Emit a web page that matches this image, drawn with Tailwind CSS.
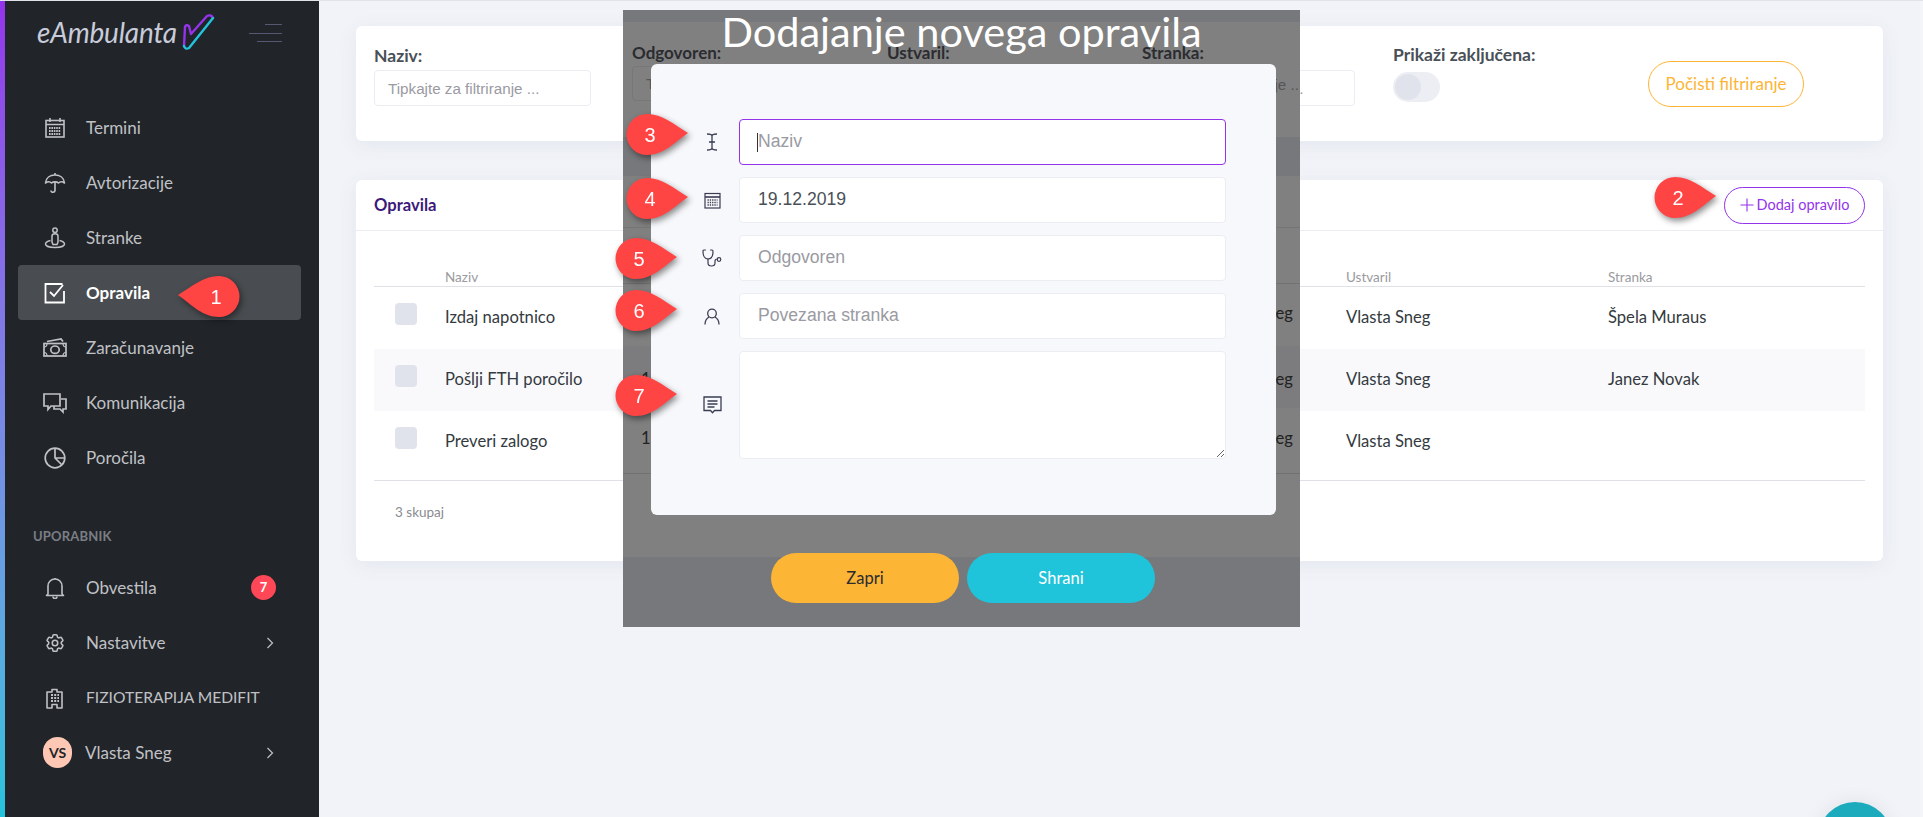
<!DOCTYPE html>
<html lang="sl">
<head>
<meta charset="UTF-8">
<meta name="viewport" content="width=device-width, initial-scale=1.0">
<title>Opravila - eAmbulanta</title>
<script src="https://cdn.jsdelivr.net/npm/@tailwindcss/browser@4"></script>
</head>
<body class="relative h-[817px] w-full overflow-hidden bg-[#f1f3f8] font-['Lato',sans-serif] text-[#343a40]">

<div class="flex h-full flex-col">
  <div class="h-px shrink-0 bg-[#e1e3ea]"></div>
  <div class="flex min-h-0 flex-1">

    <!-- Sidebar -->
    <aside class="flex w-[319px] shrink-0 bg-[#212529]">
      <div class="w-[5px] shrink-0 bg-gradient-to-b from-[#9333ea] to-[#22c3dc]"></div>
      <div class="flex-1">
        <!-- Logo -->
        <div class="flex h-[60px] items-start pl-[32px]">
          <span class="mt-[14px] text-[28px] leading-[34px] tracking-[-0.2px] text-[#c8cbd9] italic">eAmbulanta</span>
          <svg class="mt-[4px] ml-[-7px] shrink-0" width="60" height="55" viewBox="0 0 60 55" fill="none" stroke-width="2.4" stroke-linecap="round" stroke-linejoin="round">
            <path d="M14 41 L15 22 Q16 19 19 21 L21 29 L37 11 Q41 9 43 13" stroke="#9333ea"/>
            <path d="M43 13 L19 43 Q15 45 14 41" stroke="#22c3dc"/>
          </svg>
          <div class="mt-[23px] ml-[19px] flex w-[33px] flex-col items-end gap-[7.5px]">
            <div class="h-px w-[17px] bg-[#565871]"></div>
            <div class="h-px w-[33px] bg-[#565871]"></div>
            <div class="h-px w-[25px] bg-[#565871]"></div>
          </div>
        </div>

        <!-- Main nav -->
        <nav class="mt-[39px] pr-[18px] pl-[13px] text-[17px] text-[#c0c1c6]">
          <a class="flex h-[55px] items-center pl-[26px]">
            <svg class="mr-[20px] shrink-0" width="22" height="22" viewBox="0 0 22 22" fill="none" stroke="currentColor" stroke-width="1.6"><rect x="2" y="3.5" width="18" height="16.5"/><path d="M6 1v4M16 1v4M2 7.5h18"/><path d="M5 11h12M5 14h12M5 17h12" stroke-width="2" stroke-dasharray="1.6 .8"/></svg>
            <span>Termini</span>
          </a>
          <a class="flex h-[55px] items-center pl-[26px]">
            <svg class="mr-[20px] shrink-0" width="22" height="22" viewBox="0 0 22 22" fill="none" stroke="currentColor" stroke-width="1.6"><path d="M1.5 11C2 6 6 3 11 3s9 3 9.500 8c-2-1.500-4.500-1.500-6 0-1.500-1.500-5.500-1.500-7 0-1.500-1.500-4-1.500-6 0z" stroke-linejoin="round"/><path d="M11 1v2M11 10v8c0 3-4 3-4 .5"/></svg>
            <span>Avtorizacije</span>
          </a>
          <a class="flex h-[55px] items-center pl-[26px]">
            <svg class="mr-[20px] shrink-0" width="22" height="22" viewBox="0 0 22 22" fill="none" stroke="currentColor" stroke-width="1.5"><circle cx="11" cy="3.200" r="2.200"/><path d="M8 15V9c0-3 6-3 6 0v6l-1 2.500H9z"/><path d="M6.500 13.500C3.500 14.300 1.500 15.500 1.500 17c0 2 4 3.500 9.500 3.500s9.500-1.500 9.500-3.500c0-1.500-2-2.700-5-3.500"/></svg>
            <span>Stranke</span>
          </a>
          <a class="flex h-[55px] items-center rounded bg-[#494c50] pl-[26px] font-bold text-white">
            <svg class="mr-[20px] shrink-0" width="22" height="22" viewBox="0 0 22 22" fill="none" stroke="currentColor" stroke-width="1.8"><path d="M20 9v11.500H1.500V2h17"/><path d="M6 10l4 4 9-11"/></svg>
            <span>Opravila</span>
          </a>
          <a class="flex h-[55px] items-center pl-[26px]">
            <svg class="mr-[19px] ml-[-1px] shrink-0" width="24" height="22" viewBox="0 0 24 22" fill="none" stroke="currentColor" stroke-width="1.7"><rect x="1" y="6.500" width="22" height="12.500"/><ellipse cx="12" cy="12.700" rx="4.200" ry="3.700"/><path d="M4 4.500l14-2.500 2 2.500" /><path d="M1 10c2 0 3-1 3-3.500M23 10c-2 0-3-1-3-3.500M1 15.500c2 0 3 1 3 3.500M23 15.500c-2 0-3 1-3 3.500" stroke-width="1.200"/></svg>
            <span>Zaračunavanje</span>
          </a>
          <a class="flex h-[55px] items-center pl-[26px]">
            <svg class="mr-[19px] ml-[-1px] shrink-0" width="24" height="22" viewBox="0 0 24 22" fill="none" stroke="currentColor" stroke-width="1.7"><path d="M1 2h16v12H8l-3 3.500V14H1z"/><path d="M18 7h5v10h-3v3l-3-3h-6v-3"/></svg>
            <span>Komunikacija</span>
          </a>
          <a class="flex h-[55px] items-center pl-[26px]">
            <svg class="mr-[20px] shrink-0" width="22" height="22" viewBox="0 0 22 22" fill="none" stroke="currentColor" stroke-width="1.7"><circle cx="11" cy="11" r="9.800"/><path d="M11 1.200V11l7 7M11 11h9.800"/></svg>
            <span>Poročila</span>
          </a>
        </nav>

        <div class="mt-[35px] h-[32px] pl-[28px] text-[13px] leading-[32px] font-bold tracking-[0.2px] text-[#7b7e85]">UPORABNIK</div>

        <!-- User nav -->
        <nav class="mt-[8px] pr-[18px] pl-[13px] text-[17px] text-[#c0c1c6]">
          <a class="flex h-[55px] items-center pl-[26px]">
            <svg class="mr-[20px] shrink-0" width="22" height="22" viewBox="0 0 22 22" fill="none" stroke="currentColor" stroke-width="1.600"><path d="M4 17V9a7 7 0 0 1 14 0v8l1.500 1.500h-17z" stroke-linejoin="round"/><path d="M9 19.500a2 2 0 0 0 4 0M11 1v1"/></svg>
            <span class="flex-1">Obvestila</span>
            <span class="mr-[25px] flex h-[25px] w-[25px] items-center justify-center rounded-full bg-[#ff4757] text-[13px] font-bold text-white">7</span>
          </a>
          <a class="flex h-[55px] items-center pl-[26px]">
            <svg class="mr-[20px] shrink-0" width="22" height="22" viewBox="0 0 24 24" fill="none" stroke="currentColor" stroke-width="1.700" stroke-linejoin="round"><path d="M9.594 3.940c.09-.542.560-.940 1.110-.940h2.593c.550 0 1.020.398 1.110.940l.213 1.281c.063.374.313.686.645.870.074.040.147.083.220.127.325.196.720.257 1.075.124l1.217-.456a1.125 1.125 0 0 1 1.370.490l1.296 2.247a1.125 1.125 0 0 1-.260 1.431l-1.003.827c-.293.241-.438.613-.430.992a7.723 7.723 0 0 1 0 .255c-.008.378.137.750.430.991l1.004.827c.424.350.534.955.260 1.430l-1.298 2.247a1.125 1.125 0 0 1-1.369.491l-1.217-.456c-.355-.133-.750-.072-1.076.124a6.470 6.470 0 0 1-.220.128c-.331.183-.581.495-.644.869l-.213 1.281c-.090.543-.560.940-1.110.940h-2.594c-.550 0-1.019-.398-1.110-.940l-.213-1.281c-.062-.374-.312-.686-.644-.870a6.520 6.520 0 0 1-.220-.127c-.325-.196-.720-.257-1.076-.124l-1.217.456a1.125 1.125 0 0 1-1.369-.490l-1.297-2.247a1.125 1.125 0 0 1 .260-1.431l1.004-.827c.292-.240.437-.613.430-.991a6.932 6.932 0 0 1 0-.255c.007-.380-.138-.751-.430-.992l-1.004-.827a1.125 1.125 0 0 1-.260-1.430l1.297-2.247a1.125 1.125 0 0 1 1.370-.491l1.216.456c.356.133.751.072 1.076-.124.072-.044.146-.086.220-.128.332-.183.582-.495.644-.869l.214-1.280z"/><circle cx="12" cy="12" r="3"/></svg>
            <span class="flex-1">Nastavitve</span>
            <svg class="mr-[27px]" width="8" height="12" viewBox="0 0 8 12" fill="none" stroke="currentColor" stroke-width="1.200"><path d="M1.500 1l5 5-5 5"/></svg>
          </a>
          <a class="flex h-[55px] items-center pl-[26px]">
            <svg class="mr-[20px] shrink-0" width="22" height="22" viewBox="0 0 22 22" fill="none" stroke="currentColor" stroke-width="1.600"><path d="M3 5h5V2.500h5V5h5v16h-5v-3.500H8V21H3z" stroke-linejoin="round"/><path d="M7 8h8M7 11h8M7 14h8" stroke-width="2" stroke-dasharray="2 1.200"/></svg>
            <span class="text-[15.600px] whitespace-nowrap">FIZIOTERAPIJA MEDIFIT</span>
          </a>
          <a class="flex h-[55px] items-center pl-[25px]">
            <span class="mr-[13px] flex h-[31px] w-[29px] shrink-0 items-center justify-center rounded-full bg-[#ffc8b4] text-[14px] font-bold text-[#212529]">VS</span>
            <span class="flex-1">Vlasta Sneg</span>
            <svg class="mr-[27px]" width="8" height="12" viewBox="0 0 8 12" fill="none" stroke="currentColor" stroke-width="1.200"><path d="M1.500 1l5 5-5 5"/></svg>
          </a>
        </nav>
      </div>
    </aside>

    <!-- Main -->
    <main class="min-w-0 flex-1 pt-[25px] pr-[37px] pl-[37px]">
      <!-- Filters -->
      <section class="flex h-[115px] rounded-md bg-white px-[18px] shadow-[0_4px_20px_rgba(80,90,130,0.08)]">
        <div class="mt-[19px] w-[217px]">
          <label class="block text-[17.500px] leading-[22px] font-bold text-[#495057]">Naziv:</label>
          <input class="mt-[3px] h-[36px] w-full rounded border border-[#ebedf2] px-[13px] font-['Liberation_Sans',sans-serif] text-[15.200px] placeholder:text-[#9a9aa2]" placeholder="Tipkajte za filtriranje ...">
        </div>
        <div class="mt-[44px] ml-[547px] w-[217px]">
          <input class="h-[36px] w-full rounded border border-[#ebedf2] px-[13px] font-['Liberation_Sans',sans-serif] text-[15.200px] placeholder:text-[#9a9aa2]" placeholder="Tipkajte za filtriranje ...">
        </div>
        <div class="mt-[18px] ml-[38px] w-[255px]">
          <label class="block text-[17.500px] leading-[22px] font-bold whitespace-nowrap text-[#495057]">Prikaži zaključena:</label>
          <div class="mt-[6px] h-[30px] w-[47px] rounded-full bg-[#eceef3] p-[2px]">
            <div class="h-[26px] w-[26px] rounded-full bg-[#e0e3ec]"></div>
          </div>
        </div>
        <button class="mt-[35px] h-[46px] w-[156px] rounded-full border border-[#fdb536] text-[17px] text-[#fdb536]">Počisti filtriranje</button>
      </section>

      <!-- Tasks -->
      <section class="mt-[39px] h-[381px] rounded-md bg-white shadow-[0_4px_20px_rgba(80,90,130,0.08)]">
        <header class="flex h-[51px] items-center justify-between border-b border-[#ebedf2] pr-[18px] pl-[18px]">
          <h2 class="text-[16.600px] font-bold text-[#3b1a7a]">Opravila</h2>
          <button class="flex h-[37px] w-[141px] items-center justify-center gap-[3px] rounded-full border border-[#9333ea] text-[14.500px] text-[#9333ea]">
            <svg width="14" height="14" viewBox="0 0 14 14" fill="none" stroke="currentColor" stroke-width="1.100"><path d="M7 .5v13M.5 7h13"/></svg>
            <span>Dodaj opravilo</span>
          </button>
        </header>
        <div class="mx-[18px]">
          <div class="grid h-[56px] grid-cols-[71px_901px_262px_1fr] items-end border-b border-[#dfe1e6] text-[13.500px] leading-[18px] text-[#9a9ba0]">
            <span></span><span>Naziv</span><span>Ustvaril</span><span>Stranka</span>
          </div>
          <div class="grid h-[62px] grid-cols-[71px_901px_262px_1fr] items-center pb-[2px] text-[16.600px]">
            <span class="mb-[6px] ml-[21px] h-[22px] w-[22px] rounded bg-[#e0e3ec]"></span><span>Izdaj napotnico</span><span>Vlasta Sneg</span><span>Špela Muraus</span>
          </div>
          <div class="grid h-[62px] grid-cols-[71px_901px_262px_1fr] items-center bg-[#f9f9fc] pb-[2px] text-[16.600px]">
            <span class="mb-[6px] ml-[21px] h-[22px] w-[22px] rounded bg-[#e0e3ec]"></span><span>Pošlji FTH poročilo</span><span>Vlasta Sneg</span><span>Janez Novak</span>
          </div>
          <div class="grid h-[70px] grid-cols-[71px_901px_262px_1fr] items-center border-b border-[#dfe1e6] pb-[8px] text-[16.600px]">
            <span class="mb-[8px] ml-[21px] h-[22px] w-[22px] rounded bg-[#e0e3ec]"></span><span>Preveri zalogo</span><span>Vlasta Sneg</span><span></span>
          </div>
          <p class="mt-[21px] pl-[21px] text-[13.500px] text-[#8a8b90]">3 skupaj</p>
        </div>
      </section>
    </main>
    <div class="w-[3px] shrink-0 bg-[#f4f5f8]"></div>
  </div>
</div>

<!-- Chat button, cut off by the window -->
<div class="absolute top-[802px] left-[1818px] h-[74px] w-[74px] rounded-full bg-[#1cabbd] shadow-[0_0_20px_rgba(0,0,0,0.08)]"></div>

<!-- Dimmed dialog layer -->
<div class="absolute top-[10px] left-[623px] h-[617px] w-[677px] overflow-hidden bg-[#77787b]">
  <div class="absolute top-[12px] left-0 h-[115px] w-full bg-[#808080]">
    <div class="flex pt-[20px] pl-[9px] text-[17px] leading-[22px] font-bold text-[#2b2c30]">
      <span class="w-[255px]">Odgovoren:</span><span class="w-[255px]">Ustvaril:</span><span>Stranka:</span>
    </div>
    <div class="mt-[2px] ml-[9px] h-[35px] w-[100px] rounded border border-[#777] pl-[13px] font-['Liberation_Sans',sans-serif] text-[15.200px] leading-[33px] text-[#555]">Tipkajte</div>
    <span class="absolute top-[46px] left-[643px] font-['Liberation_Sans',sans-serif] text-[15.200px] leading-[33px] whitespace-nowrap text-[#555]">nje ...</span>
  </div>
  <div class="absolute top-[166px] left-0 h-[381px] w-full bg-[#808080]">
    <div class="mt-[51px] border-t border-[#757575]"></div>
    <div class="mt-[55px] border-t border-[#727272]"></div>
    <div class="h-[62px] pt-[18px] text-[16.600px] leading-[22px] text-[#222]"><span class="float-right pr-[7px]">Vlasta Sneg</span></div>
    <div class="h-[62px] bg-[#7c7c7e] pt-[22px] text-[16.600px] leading-[22px] text-[#222]"><span class="pl-[18px]">19.12.2019</span><span class="float-right pr-[7px]">Vlasta Sneg</span></div>
    <div class="h-[66px] border-b border-[#727272] pt-[19px] text-[16.600px] leading-[22px] text-[#222]"><span class="pl-[18px]">19.12.2019</span><span class="float-right pr-[7px]">Vlasta Sneg</span></div>
  </div>

  <h1 class="absolute top-[-6px] left-0 w-full text-center text-[41.500px] leading-[54px] text-white">Dodajanje novega opravila</h1>

  <!-- Dialog body -->
  <div class="absolute top-[54px] left-[28px] flex h-[451px] w-[625px] flex-col gap-[12px] rounded-md bg-[#f7f8fb] pt-[55px] pr-[50px] pl-[41px] font-['Liberation_Sans',sans-serif] text-[17.600px]">
    <div class="flex items-center gap-[7px]">
      <div class="flex w-[40px] justify-center text-[#3a3d52]">
        <svg width="14" height="18" viewBox="0 0 14 18" fill="none" stroke="currentColor" stroke-width="1.300"><path d="M2 1c3 0 5 .5 5 2v12c0 1.500-2 2-5 2M12 1c-3 0-5 .5-5 2v12c0 1.500 2 2 5 2M4 9h6"/></svg>
      </div>
      <div class="relative flex-1">
        <input class="h-[46px] w-full rounded border border-[#9333ea] bg-white px-[18px] pb-[2px] placeholder:text-[#9a9aa2]" placeholder="Naziv">
        <span class="absolute top-[14px] left-[18px] h-[19px] w-px bg-[#333]"></span>
      </div>
    </div>
    <div class="flex items-center gap-[7px]">
      <div class="flex w-[40px] justify-center text-[#3a3d52]">
        <svg width="17" height="17" viewBox="0 0 17 17" fill="none" stroke="currentColor" stroke-width="1.200"><rect x="1" y="1.500" width="15" height="14.500"/><path d="M1 5h15" stroke-width="1.600"/><path d="M3.500 8h10M3.500 10.500h10M3.500 13h10" stroke-dasharray="1.300 1" stroke-width="1.300"/></svg>
      </div>
      <input class="h-[46px] flex-1 rounded border border-[#ebedf2] bg-white px-[18px] pb-[2px] text-[#495057]" value="19.12.2019">
    </div>
    <div class="flex items-center gap-[7px]">
      <div class="flex w-[40px] justify-center text-[#3a3d52]">
        <svg width="20" height="19" viewBox="0 0 20 19" fill="none" stroke="currentColor" stroke-width="1.200" stroke-linecap="round"><path d="M3.500 1H2C1.200 1 1 1.500 1 2.500 1 7 3 10 6 10s5-3 5-7.500C11 1.500 10.800 1 10 1H8.500"/><path d="M6 10v4c0 4 7 4 7 0v-2c0-1 1-2 2.500-2"/><circle cx="17" cy="10.500" r="1.800"/></svg>
      </div>
      <input class="h-[46px] flex-1 rounded border border-[#ebedf2] bg-white px-[18px] pb-[2px] placeholder:text-[#9a9aa2]" placeholder="Odgovoren">
    </div>
    <div class="flex items-center gap-[7px]">
      <div class="flex w-[40px] justify-center text-[#3a3d52]">
        <svg width="16" height="17" viewBox="0 0 16 17" fill="none" stroke="currentColor" stroke-width="1.300"><circle cx="8" cy="5.500" r="4.300"/><path d="M5 9C2.500 10.500 1 13 1 16.500M11 9c2.500 1.500 4 4 4 7.500"/></svg>
      </div>
      <input class="h-[46px] flex-1 rounded border border-[#ebedf2] bg-white px-[18px] pb-[2px] placeholder:text-[#9a9aa2]" placeholder="Povezana stranka">
    </div>
    <div class="flex items-center gap-[7px]">
      <div class="flex w-[40px] justify-center text-[#3a3d52]">
        <svg width="19" height="18" viewBox="0 0 19 18" fill="none" stroke="currentColor" stroke-width="1.300"><path d="M1 1h17v13.500h-6.500l-2 2.200-2-2.200H1z"/><path d="M4.500 5h10M4.500 8h10M4.500 11h7"/></svg>
      </div>
      <textarea class="h-[108px] flex-1 rounded border border-[#ebedf2] bg-white"></textarea>
    </div>
  </div>

  <!-- Dialog actions -->
  <div class="absolute top-[543px] left-[148px] flex gap-[8px] text-[16.500px]">
    <button class="h-[50px] w-[188px] rounded-full bg-[#fdb536] text-[#2b2c30]">Zapri</button>
    <button class="h-[50px] w-[188px] rounded-full bg-[#1fc4db] text-white">Shrani</button>
  </div>
</div>

<!-- Numbered callouts -->
<div class="absolute top-[276px] left-[178px] h-[41px] w-[63px] drop-shadow-[2px_3px_3px_rgba(0,0,0,0.45)]">
  <svg class="absolute inset-0 -scale-x-100" width="63" height="41" viewBox="0 0 63 41"><path d="M63 19C48 10 38 0 22 0a20.500 20.500 0 0 0 0 41c16 0 26-11 41-22z" fill="#ff4444"/></svg>
  <span class="absolute right-[15px] w-[20px] text-center font-['Liberation_Sans',sans-serif] text-[20px] leading-[43px] text-white">1</span>
</div>
<div class="absolute top-[177px] left-[1653px] h-[41px] w-[63px] drop-shadow-[2px_3px_3px_rgba(0,0,0,0.45)]">
  <svg class="absolute inset-0" width="63" height="41" viewBox="0 0 63 41"><path d="M63 19C48 10 38 0 22 0a20.500 20.500 0 0 0 0 41c16 0 26-11 41-22z" fill="#ff4444"/></svg>
  <span class="absolute left-[15px] w-[20px] text-center font-['Liberation_Sans',sans-serif] text-[20px] leading-[43px] text-white">2</span>
</div>
<div class="absolute top-[114px] left-[625px] h-[41px] w-[63px] drop-shadow-[2px_3px_3px_rgba(0,0,0,0.45)]">
  <svg class="absolute inset-0" width="63" height="41" viewBox="0 0 63 41"><path d="M63 19C48 10 38 0 22 0a20.500 20.500 0 0 0 0 41c16 0 26-11 41-22z" fill="#ff4444"/></svg>
  <span class="absolute left-[15px] w-[20px] text-center font-['Liberation_Sans',sans-serif] text-[20px] leading-[43px] text-white">3</span>
</div>
<div class="absolute top-[178px] left-[625px] h-[41px] w-[63px] drop-shadow-[2px_3px_3px_rgba(0,0,0,0.45)]">
  <svg class="absolute inset-0" width="63" height="41" viewBox="0 0 63 41"><path d="M63 19C48 10 38 0 22 0a20.500 20.500 0 0 0 0 41c16 0 26-11 41-22z" fill="#ff4444"/></svg>
  <span class="absolute left-[15px] w-[20px] text-center font-['Liberation_Sans',sans-serif] text-[20px] leading-[43px] text-white">4</span>
</div>
<div class="absolute top-[238px] left-[614px] h-[41px] w-[63px] drop-shadow-[2px_3px_3px_rgba(0,0,0,0.45)]">
  <svg class="absolute inset-0" width="63" height="41" viewBox="0 0 63 41"><path d="M63 19C48 10 38 0 22 0a20.500 20.500 0 0 0 0 41c16 0 26-11 41-22z" fill="#ff4444"/></svg>
  <span class="absolute left-[15px] w-[20px] text-center font-['Liberation_Sans',sans-serif] text-[20px] leading-[43px] text-white">5</span>
</div>
<div class="absolute top-[290px] left-[614px] h-[41px] w-[63px] drop-shadow-[2px_3px_3px_rgba(0,0,0,0.45)]">
  <svg class="absolute inset-0" width="63" height="41" viewBox="0 0 63 41"><path d="M63 19C48 10 38 0 22 0a20.500 20.500 0 0 0 0 41c16 0 26-11 41-22z" fill="#ff4444"/></svg>
  <span class="absolute left-[15px] w-[20px] text-center font-['Liberation_Sans',sans-serif] text-[20px] leading-[43px] text-white">6</span>
</div>
<div class="absolute top-[375px] left-[614px] h-[41px] w-[63px] drop-shadow-[2px_3px_3px_rgba(0,0,0,0.45)]">
  <svg class="absolute inset-0" width="63" height="41" viewBox="0 0 63 41"><path d="M63 19C48 10 38 0 22 0a20.500 20.500 0 0 0 0 41c16 0 26-11 41-22z" fill="#ff4444"/></svg>
  <span class="absolute left-[15px] w-[20px] text-center font-['Liberation_Sans',sans-serif] text-[20px] leading-[43px] text-white">7</span>
</div>

</body>
</html>
